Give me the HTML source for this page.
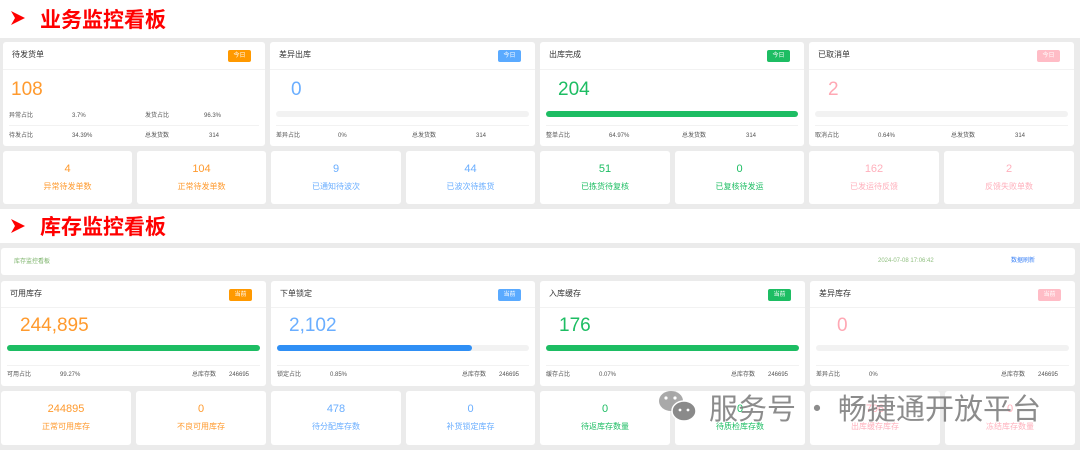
<!DOCTYPE html>
<html><head><meta charset="utf-8"><style>
*{margin:0;padding:0;box-sizing:border-box}
body{width:1080px;height:450px;background:#ebebeb;font-family:"Liberation Sans","Noto Sans CJK SC",sans-serif;position:relative;overflow:hidden}
.a{position:absolute}
.w{background:#fff;position:absolute;border-radius:3px}
.hd{background:#fff;position:absolute;left:0;width:1080px}
.ht{position:absolute;left:40px;font-size:21px;line-height:24px;font-weight:bold;color:#f00;font-family:"Noto Sans CJK SC",sans-serif}
.t{position:absolute;left:9px;top:8px;font-size:8px;line-height:10px;color:#333}
.bd{position:absolute;top:8px;right:14px;width:23px;height:12px;border-radius:2px;color:#fff;font-size:6px;text-align:center;line-height:12px}
.ln{position:absolute;left:0;right:0;height:1px;background:#f2f2f2}
.n{position:absolute;font-size:19px;line-height:20px}
.s{position:absolute;font-size:6px;line-height:8px;color:#555}
.bar{position:absolute;height:6px;border-radius:3px;background:#f2f2f2}
.c{text-align:center}
.c .v{position:absolute;left:0;right:0;top:12px;font-size:11px;line-height:12px}
.c .l{position:absolute;left:0;right:0;top:31px;font-size:8px;line-height:10px}
</style></head><body>
<div class="hd" style="top:0;height:38px">
<svg class="a" style="left:10px;top:10px" width="16" height="16" viewBox="0 0 16 16"><path d="M1 1 L15 8 L1 15 L5 8 Z" fill="#f00"/></svg>
<span class="ht" style="top:7px">业务监控看板</span></div>

<div class="w" style="left:3px;top:42px;width:262px;height:104px">
<div class="t">待发货单</div><div class="bd" style="background:#ff9900">今日</div><div class="ln" style="top:27px"></div>
<div class="n" style="left:8px;top:38px;color:#ff9a2e">108</div>
<div class="s" style="left:6px;top:70px">异常占比</div><div class="s" style="left:69px;top:70px">3.7%</div><div class="s" style="left:142px;top:70px">发货占比</div><div class="s" style="left:201px;top:70px">96.3%</div>
<div class="ln" style="top:83px;left:6px;right:6px"></div>
<div class="s" style="left:6px;top:90px">待发占比</div><div class="s" style="left:69px;top:90px">34.39%</div><div class="s" style="left:142px;top:90px">总发货数</div><div class="s" style="left:206px;top:90px">314</div>
</div>
<div class="w" style="left:270px;top:42px;width:265px;height:104px">
<div class="t">差异出库</div><div class="bd" style="background:#5aaaff">今日</div><div class="ln" style="top:27px"></div>
<div class="n" style="left:21px;top:38px;color:#6aaeff">0</div>
<div class="bar" style="left:6px;right:6px;top:69px"></div>
<div class="ln" style="top:83px;left:6px;right:6px"></div>
<div class="s" style="left:6px;top:90px">差异占比</div><div class="s" style="left:68px;top:90px">0%</div><div class="s" style="left:142px;top:90px">总发货数</div><div class="s" style="left:206px;top:90px">314</div>
</div>
<div class="w" style="left:540px;top:42px;width:264px;height:104px">
<div class="t">出库完成</div><div class="bd" style="background:#1dbd63">今日</div><div class="ln" style="top:27px"></div>
<div class="n" style="left:18px;top:38px;color:#1dbd63">204</div>
<div class="bar" style="left:6px;right:6px;top:69px;background:#1dbd63"></div>
<div class="ln" style="top:83px;left:6px;right:6px"></div>
<div class="s" style="left:6px;top:90px">整单占比</div><div class="s" style="left:69px;top:90px">64.97%</div><div class="s" style="left:142px;top:90px">总发货数</div><div class="s" style="left:206px;top:90px">314</div>
</div>
<div class="w" style="left:809px;top:42px;width:265px;height:104px">
<div class="t">已取消单</div><div class="bd" style="background:#ffbcc6">今日</div><div class="ln" style="top:27px"></div>
<div class="n" style="left:19px;top:38px;color:#ffa8b4">2</div>
<div class="bar" style="left:6px;right:6px;top:69px"></div>
<div class="ln" style="top:83px;left:6px;right:6px"></div>
<div class="s" style="left:6px;top:90px">取消占比</div><div class="s" style="left:69px;top:90px">0.64%</div><div class="s" style="left:142px;top:90px">总发货数</div><div class="s" style="left:206px;top:90px">314</div>
</div>

<div class="w c" style="left:3px;top:151px;width:129px;height:53px;color:#ff9a2e"><div class="v">4</div><div class="l">异常待发单数</div></div>
<div class="w c" style="left:137px;top:151px;width:129px;height:53px;color:#ff9a2e"><div class="v">104</div><div class="l">正常待发单数</div></div>
<div class="w c" style="left:271px;top:151px;width:130px;height:53px;color:#6aaeff"><div class="v">9</div><div class="l">已通知待波次</div></div>
<div class="w c" style="left:406px;top:151px;width:129px;height:53px;color:#6aaeff"><div class="v">44</div><div class="l">已波次待拣货</div></div>
<div class="w c" style="left:540px;top:151px;width:130px;height:53px;color:#1dbd63"><div class="v">51</div><div class="l">已拣货待复核</div></div>
<div class="w c" style="left:675px;top:151px;width:129px;height:53px;color:#1dbd63"><div class="v">0</div><div class="l">已复核待发运</div></div>
<div class="w c" style="left:809px;top:151px;width:130px;height:53px;color:#ffb0bc"><div class="v">162</div><div class="l">已发运待反馈</div></div>
<div class="w c" style="left:944px;top:151px;width:130px;height:53px;color:#ffb0bc"><div class="v">2</div><div class="l">反馈失败单数</div></div>

<div class="hd" style="top:209px;height:34px">
<svg class="a" style="left:10px;top:9px" width="16" height="16" viewBox="0 0 16 16"><path d="M1 1 L15 8 L1 15 L5 8 Z" fill="#f00"/></svg>
<span class="ht" style="top:5px">库存监控看板</span></div>

<div class="w" style="left:1px;top:248px;width:1074px;height:27px">
<div class="s" style="left:13px;top:10px;color:#7cb36a">库存监控看板</div>
<div class="s" style="left:877px;top:9px;color:#8fbf7f">2024-07-08 17:06:42</div>
<div class="s" style="left:1010px;top:9px;color:#3b82f6">数据刷新</div>
</div>

<div class="w" style="left:1px;top:281px;width:265px;height:105px">
<div class="t">可用库存</div><div class="bd" style="background:#ff9900">当前</div><div class="ln" style="top:26px"></div>
<div class="n" style="left:19px;top:35px;color:#ff9a2e">244,895</div>
<div class="bar" style="left:6px;right:6px;top:64px;background:#1dbd63"></div>
<div class="ln" style="top:84px;left:6px;right:6px"></div>
<div class="s" style="left:6px;top:90px">可用占比</div><div class="s" style="left:59px;top:90px">99.27%</div><div class="s" style="left:191px;top:90px">总库存数</div><div class="s" style="left:228px;top:90px">246695</div>
</div>
<div class="w" style="left:271px;top:281px;width:264px;height:105px">
<div class="t">下单锁定</div><div class="bd" style="background:#5aaaff">当前</div><div class="ln" style="top:26px"></div>
<div class="n" style="left:18px;top:35px;color:#6aaeff">2,102</div>
<div class="bar" style="left:6px;right:6px;top:64px"></div><div class="bar" style="left:6px;width:195px;top:64px;background:#2f8ff5"></div>
<div class="ln" style="top:84px;left:6px;right:6px"></div>
<div class="s" style="left:6px;top:90px">锁定占比</div><div class="s" style="left:59px;top:90px">0.85%</div><div class="s" style="left:191px;top:90px">总库存数</div><div class="s" style="left:228px;top:90px">246695</div>
</div>
<div class="w" style="left:540px;top:281px;width:265px;height:105px">
<div class="t">入库缓存</div><div class="bd" style="background:#1dbd63">当前</div><div class="ln" style="top:26px"></div>
<div class="n" style="left:19px;top:35px;color:#1dbd63">176</div>
<div class="bar" style="left:6px;right:6px;top:64px;background:#1dbd63"></div>
<div class="ln" style="top:84px;left:6px;right:6px"></div>
<div class="s" style="left:6px;top:90px">缓存占比</div><div class="s" style="left:59px;top:90px">0.07%</div><div class="s" style="left:191px;top:90px">总库存数</div><div class="s" style="left:228px;top:90px">246695</div>
</div>
<div class="w" style="left:810px;top:281px;width:265px;height:105px">
<div class="t">差异库存</div><div class="bd" style="background:#ffbcc6">当前</div><div class="ln" style="top:26px"></div>
<div class="n" style="left:27px;top:35px;color:#ffa8b4">0</div>
<div class="bar" style="left:6px;right:6px;top:64px"></div>
<div class="ln" style="top:84px;left:6px;right:6px"></div>
<div class="s" style="left:6px;top:90px">差异占比</div><div class="s" style="left:59px;top:90px">0%</div><div class="s" style="left:191px;top:90px">总库存数</div><div class="s" style="left:228px;top:90px">246695</div>
</div>

<div class="w c" style="left:1px;top:391px;width:130px;height:54px;color:#ff9a2e"><div class="v">244895</div><div class="l">正常可用库存</div></div>
<div class="w c" style="left:136px;top:391px;width:130px;height:54px;color:#ff9a2e"><div class="v">0</div><div class="l">不良可用库存</div></div>
<div class="w c" style="left:271px;top:391px;width:130px;height:54px;color:#6aaeff"><div class="v">478</div><div class="l">待分配库存数</div></div>
<div class="w c" style="left:406px;top:391px;width:129px;height:54px;color:#6aaeff"><div class="v">0</div><div class="l">补货锁定库存</div></div>
<div class="w c" style="left:540px;top:391px;width:130px;height:54px;color:#1dbd63"><div class="v">0</div><div class="l">待返库存数量</div></div>
<div class="w c" style="left:675px;top:391px;width:130px;height:54px;color:#1dbd63"><div class="v">0</div><div class="l">待质检库存数</div></div>
<div class="w c" style="left:810px;top:391px;width:130px;height:54px;color:#ffb0bc"><div class="v">706</div><div class="l">出库缓存库存</div></div>
<div class="w c" style="left:945px;top:391px;width:130px;height:54px;color:#ffb0bc"><div class="v">0</div><div class="l">冻结库存数量</div></div>

<svg class="a" style="left:657px;top:389px" width="42" height="36" viewBox="0 0 42 36">
<ellipse cx="14" cy="12" rx="12" ry="10" fill="#9a9a9a" opacity=".85"/>
<ellipse cx="27" cy="22" rx="12" ry="10" fill="#8a8a8a" stroke="#fff" stroke-width="1.5"/>
<circle cx="9" cy="9" r="1.6" fill="#fff"/><circle cx="18" cy="9" r="1.6" fill="#fff"/>
<circle cx="23" cy="21" r="1.4" fill="#fff"/><circle cx="31" cy="21" r="1.4" fill="#fff"/>
</svg>
<div class="a" style="left:709px;top:389px;font-size:29px;line-height:36px;color:rgba(120,120,120,.85);white-space:nowrap;font-family:'Noto Sans CJK SC',sans-serif">服务号 · 畅捷通开放平台</div>
</body></html>
